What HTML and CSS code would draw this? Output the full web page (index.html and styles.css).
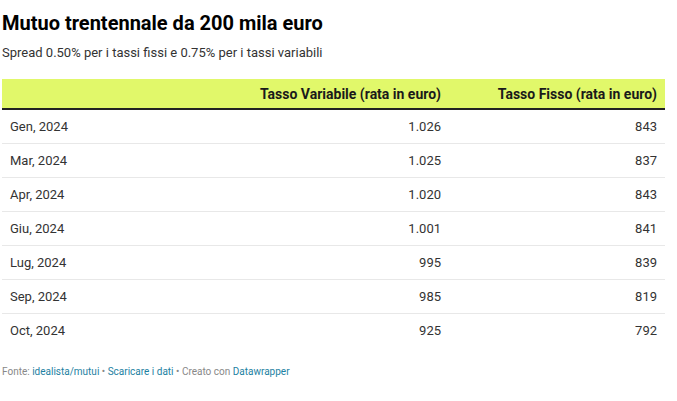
FILE: index.html
```html
<!DOCTYPE html>
<html lang="it">
<head>
<meta charset="utf-8">
<title>Mutuo trentennale da 200 mila euro</title>
<link rel="stylesheet" href="styles.css">
</head>
<body>
<div class="chart">
  <h1 class="title">Mutuo trentennale da 200 mila euro</h1>
  <p class="desc">Spread 0.50% per i tassi fissi e 0.75% per i tassi variabili</p>
  <table class="tbl">
    <thead>
      <tr><th class="c1"></th><th class="c2">Tasso Variabile (rata in euro)</th><th class="c3">Tasso Fisso (rata in euro)</th></tr>
    </thead>
    <tbody>
      <tr><td class="c1">Gen, 2024</td><td class="c2">1.026</td><td class="c3">843</td></tr>
      <tr><td class="c1">Mar, 2024</td><td class="c2">1.025</td><td class="c3">837</td></tr>
      <tr><td class="c1">Apr, 2024</td><td class="c2">1.020</td><td class="c3">843</td></tr>
      <tr><td class="c1">Giu, 2024</td><td class="c2">1.001</td><td class="c3">841</td></tr>
      <tr><td class="c1">Lug, 2024</td><td class="c2">995</td><td class="c3">839</td></tr>
      <tr><td class="c1">Sep, 2024</td><td class="c2">985</td><td class="c3">819</td></tr>
      <tr><td class="c1">Oct, 2024</td><td class="c2">925</td><td class="c3">792</td></tr>
    </tbody>
  </table>
  <p class="foot">Fonte: <a href="#">idealista/mutui</a> • <a href="#">Scaricare i dati</a> • Creato con <a href="#">Datawrapper</a></p>
</div>
</body>
</html>
```
FILE: styles.css
```css
html, body {
  margin: 0;
  padding: 0;
  background: #fff;
}
body {
  font-family: Roboto, "Liberation Sans", sans-serif;
  color: #181818;
}
.chart {
  width: 663px;
  padding: 10px 0 0 2px;
}
.title {
  margin: 0;
  font-size: 20px;
  line-height: 26px;
  font-weight: 700;
  color: #000;
}
.desc {
  margin: 8px 0 0;
  font-size: 13px;
  line-height: 18px;
  color: #333;
}
.tbl {
  margin-top: 17px;
  width: 663px;
  border-collapse: collapse;
  font-size: 13px;
}
.tbl th {
  background: #e1f86a;
  height: 29px;
  padding: 0 8px;
  font-size: 14px;
  font-weight: 700;
  color: #1a1a1a;
  text-align: right;
  border-bottom: 2px solid #222;
  vertical-align: middle;
}
.tbl td {
  height: 33px;
  padding: 0 8px;
  color: #333;
  border-bottom: 1px solid #e8e8e8;
  vertical-align: middle;
}
.tbl tbody tr:last-child td {
  border-bottom: none;
}
.c1 { width: 215px; text-align: left; }
.c2 { width: 200px; text-align: right; }
.c3 { width: 200px; text-align: right; }
.foot {
  margin: 19px 0 0;
  font-size: 10px;
  color: #888;
}
.foot a {
  color: #1d81a2;
  text-decoration: none;
}
```
